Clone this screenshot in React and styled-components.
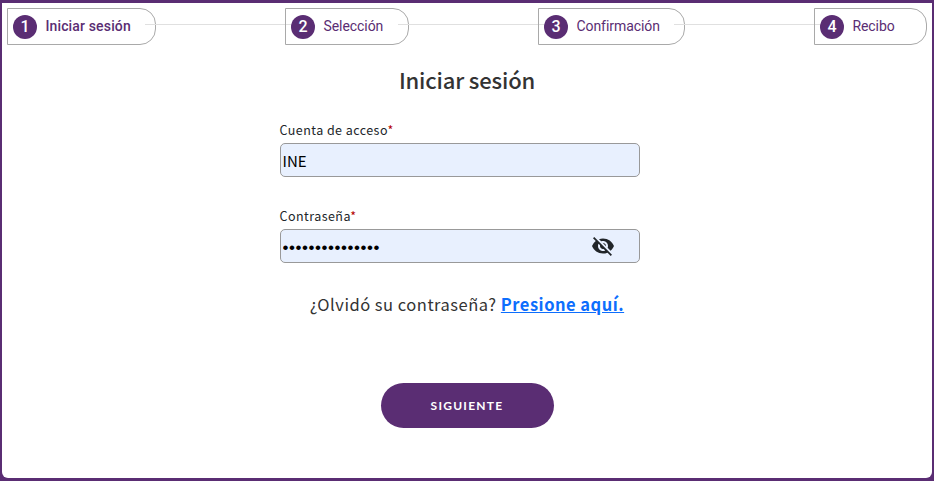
import React from 'react';
import styled, { createGlobalStyle } from 'styled-components';
import { MdVisibilityOff } from 'react-icons/md';

const GlobalStyle = createGlobalStyle`
  * { box-sizing: border-box; }
  body { margin: 0; background: #5a2d73; }
`;

const sans = '"Noto Sans CJK SC", "Open Sans", sans-serif';

const Page = styled.main`
  height: 481px;
  background: #5a2d73;
  padding: 3px 2px;
`;

const Panel = styled.div`
  height: 475px;
  background: #fff;
  border-radius: 0 0 6px 6px;
  padding: 5px 5px 0;
  display: flex;
  flex-direction: column;
  align-items: center;
  font-family: ${sans};
`;

const Stepper = styled.nav`
  display: flex;
  align-items: flex-start;
  width: 100%;
`;

const Step = styled.div`
  flex: none;
  width: ${(p) => p.$width}px;
  height: 37px;
  padding: 0 0 1px 5px;
  display: flex;
  align-items: center;
  gap: 8.4px;
  border: 1px solid #a9a9a9;
  border-radius: 0 16px 16px 0;
  color: #5a2d73;
  font: ${(p) => (p.$active ? 500 : 400)} 14px/20px Roboto, sans-serif;
  letter-spacing: ${(p) => (p.$active ? 0.15 : -0.05)}px;
  white-space: nowrap;
`;

const StepNumber = styled.span`
  width: 24px;
  height: 24px;
  margin-top: 2px;
  border-radius: 50%;
  background: #5a2d73;
  color: #fff;
  font-size: 16px;
  font-weight: 500;
  line-height: 24px;
  text-align: center;
  letter-spacing: 0;
`;

const Connector = styled.span`
  flex: 1;
  height: 1px;
  margin: 16px -6px 0 -11px;
  background: #e0e0e0;
`;

const Title = styled.h1`
  margin: 18px 0 0;
  font-size: 22px;
  font-weight: 500;
  line-height: 32px;
  letter-spacing: -0.15px;
  color: #333;
`;

const Form = styled.form`
  display: flex;
  flex-direction: column;
  align-items: center;
  width: 360px;
  margin-left: -15px;
  padding-top: 25px;
`;

const Field = styled.div`
  width: 100%;
  height: 86px;
`;

const Label = styled.label`
  display: block;
  height: 23px;
  font-size: 12.5px;
  line-height: 20px;
  letter-spacing: 0.45px;
  color: #212529;
`;

const Required = styled.span`
  color: #b30000;
`;

const InputBox = styled.div`
  display: flex;
  align-items: center;
  height: 34px;
  padding: 0 23.5px 0 2px;
  border: 1px solid #999;
  border-radius: 5px;
  background: #e8f0fe;
`;

const Input = styled.input`
  flex: 1;
  min-width: 0;
  height: 30px;
  padding: 0;
  border: 0;
  outline: 0;
  background: transparent;
  color: #000;
  font: 15px/28px ${sans};
`;

const PasswordInput = styled(Input)`
  padding-top: 4px;
  font: 17px/26px "Liberation Sans", sans-serif;
  letter-spacing: 0.55px;
`;

const HiddenIcon = styled(MdVisibilityOff)`
  width: 24px;
  height: 24px;
  color: #212529;
`;

const Recovery = styled.p`
  margin: 2px -20px 1px -5px;
  height: 20px;
  line-height: 20px;
  font-size: 16.5px;
  letter-spacing: 0.5px;
  color: #333;
  white-space: nowrap;
`;

const Link = styled.a`
  color: #0d6efd;
  font-weight: 700;
  text-decoration: underline;
`;

const Submit = styled.button`
  width: 173px;
  height: 45px;
  margin: 68px 0 0 15px;
  padding: 0;
  border: 0;
  border-radius: 23px;
  background: #5a2d73;
  color: #fff;
  font: 700 12px/45px Lato, sans-serif;
  letter-spacing: 1.25px;
`;

const steps = [
  { label: 'Iniciar sesión', width: 149 },
  { label: 'Selección', width: 124 },
  { label: 'Confirmación', width: 147 },
  { label: 'Recibo', width: 113 },
];

export default function App() {
  return (
    <Page>
      <GlobalStyle />
      <Panel>
        <Stepper>
          {steps.map((step, i) => (
            <React.Fragment key={step.label}>
              {i > 0 && <Connector />}
              <Step $width={step.width} $active={i === 0}>
                <StepNumber>{i + 1}</StepNumber>
                <span>{step.label}</span>
              </Step>
            </React.Fragment>
          ))}
        </Stepper>
        <Title>Iniciar sesión</Title>
        <Form onSubmit={(e) => e.preventDefault()}>
          <Field>
            <Label htmlFor="account">Cuenta de acceso<Required>*</Required></Label>
            <InputBox>
              <Input id="account" defaultValue="INE" />
            </InputBox>
          </Field>
          <Field>
            <Label htmlFor="password">Contraseña<Required>*</Required></Label>
            <InputBox>
              <PasswordInput id="password" type="password" defaultValue="123456789012345" />
              <HiddenIcon />
            </InputBox>
          </Field>
          <Recovery>¿Olvidó su contraseña? <Link href="#">Presione aquí.</Link></Recovery>
          <Submit type="submit">SIGUIENTE</Submit>
        </Form>
      </Panel>
    </Page>
  );
}
